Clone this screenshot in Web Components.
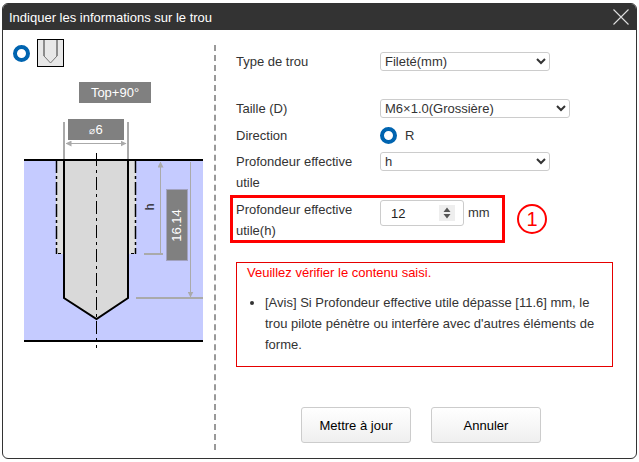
<!DOCTYPE html>
<html lang="fr">
<head>
<meta charset="utf-8">
<title>Indiquer les informations sur le trou</title>
<style>
  html, body { margin: 0; background: #fff; }
  body { padding: 3px 2px 3px 2px; font-family: "Liberation Sans", Arial, sans-serif; }
</style>
</head>
<body>
<hole-dialog heading="Indiquer les informations sur le trou">
  <hole-sketch slot="left"></hole-sketch>
  <hole-form slot="right"></hole-form>
</hole-dialog>

<script>
class HoleDialog extends HTMLElement {
  constructor() {
    super();
    this.attachShadow({ mode: 'open' });
    this.shadowRoot.innerHTML = `
      <style>
        :host {
          display: block;
          width: 635px;
          height: 456px;
          box-sizing: border-box;
          border: 1px solid #333;
          border-radius: 6px;
          overflow: hidden;
          background: #fff;
        }
        header {
          height: 26px;
          margin-top: -1px;
          padding: 1px 7px 0 6px;
          background: #333;
          color: #fff;
          font-size: 13px;
          display: flex;
          align-items: center;
          justify-content: space-between;
        }
        svg { display: block; }
        .body { display: flex; height: 429px; }
        .left { width: 211px; flex: none; position: relative; }
        .right { flex: 1; min-width: 0; }
        .divider {
          flex: none;
          width: 0;
          height: 405px;
          margin-top: 15px;
          border-left: 2px dashed #999;
        }
      </style>
      <header>
        <span id="heading"></span>
        <svg width="16" height="16" viewBox="0 0 16 16" fill="none" stroke="#ddd" stroke-width="1.1">
          <path d="M0.5 0.5 15.5 15.5M15.5 0.5 0.5 15.5"/>
        </svg>
      </header>
      <div class="body">
        <div class="left"><slot name="left"></slot></div>
        <div class="divider"></div>
        <div class="right"><slot name="right"></slot></div>
      </div>
    `;
  }

  connectedCallback() {
    this.shadowRoot.getElementById('heading').textContent = this.getAttribute('heading');
  }
}

class RadioMark extends HTMLElement {
  constructor() {
    super();
    this.attachShadow({ mode: 'open' });
    this.shadowRoot.innerHTML = `
      <style>
        :host {
          display: inline-block;
          width: 9px;
          height: 9px;
          border: 4px solid #0064b0;
          border-radius: 50%;
          background: #fff;
          flex: none;
        }
      </style>
    `;
  }
}

class HoleSketch extends HTMLElement {
  constructor() {
    super();
    this.attachShadow({ mode: 'open' });
    // svg coordinates = page coordinates, shifted by the left panel origin (3,30)
    this.shadowRoot.innerHTML = `
      <style>
        :host { display: block; height: 100%; }
        .picker { display: flex; align-items: center; gap: 7px; padding: 9px 0 0 10px; }
        svg.thumb { display: block; }
        svg.draw { display: block; position: absolute; left: 0; top: 0; }
        text { font-family: "Liberation Sans", Arial, sans-serif; }
      </style>
      <div class="picker">
        <radio-mark></radio-mark>
        <svg class="thumb" width="27" height="28" viewBox="0 0 27 28">
          <rect x="0.5" y="0.5" width="26" height="27" fill="#e8e8e8" stroke="#000"/>
          <path d="M7 1V17M20 1V17" fill="none" stroke="#333"/>
          <path d="M7 17L13.5 24L20 17" fill="none" stroke="#777"/>
        </svg>
      </div>
      <svg class="draw" width="211" height="429" viewBox="3 30 211 429">
        <defs>
          <marker id="arr" viewBox="0 0 6 6" refX="5.5" refY="3" markerWidth="6" markerHeight="6" orient="auto-start-reverse">
            <path d="M0 0 6 3 0 6Z" fill="#aaa"/>
          </marker>
        </defs>

        <rect x="79" y="82" width="72" height="21" fill="#808080"/>
        <text x="115" y="97" font-size="13" fill="#fff" text-anchor="middle">Top+90°</text>

        <rect x="24" y="160" width="179" height="181" fill="#c5cbff"/>
        <rect x="56" y="160" width="80" height="94" fill="#dfdfdf"/>
        <path d="M64 160V298L96.5 319L128 298V160Z" fill="#d9d9d9"/>
        <rect x="68" y="119" width="56" height="21" fill="#808080"/>
        <text x="96" y="134" font-size="13" fill="#fff" text-anchor="middle"><tspan font-size="10">⌀</tspan>6</text>

        <path d="M64 122V160M128 122V160" stroke="#aaa" stroke-width="2"/>
        <path d="M66 143.5H126" stroke="#aaa" marker-start="url(#arr)" marker-end="url(#arr)"/>
        <path d="M160.5 162V254M190.5 162V297" stroke="#aaa" marker-start="url(#arr)" marker-end="url(#arr)"/>
        <path d="M144 254H163M136 298H203" stroke="#aaa" stroke-width="2"/>

        <rect x="166.5" y="189.5" width="21" height="71" fill="#808080" stroke="#a3a3c0"/>
        <text transform="translate(181 225.5) rotate(-90)" font-size="13" fill="#fff" text-anchor="middle">16.14</text>
        <text transform="translate(154 207) rotate(-90)" font-size="12" fill="#222" text-anchor="middle">h</text>

        <path d="M24 160H203M24 341H203" stroke="#000" stroke-width="2"/>
        <path d="M64 160V298L96.5 319L128 298V160" fill="none" stroke="#000" stroke-width="2"/>
        <path d="M56.5 160V254M135.5 160V254" fill="none" stroke="#000" stroke-width="1.5" stroke-dasharray="13 3 3 3"/>
        <path d="M58 253.5H61M131 253.5H134" stroke="#000"/>
        <path d="M96.5 153V348" stroke="#000" stroke-dasharray="13 4 3 4"/>
      </svg>
    `;
  }
}

class HoleForm extends HTMLElement {
  constructor() {
    super();
    this.attachShadow({ mode: 'open' });
    this.shadowRoot.innerHTML = `
      <style>
        :host {
          display: block;
          height: 100%;
          padding: 22px 0 0 20px;
          box-sizing: border-box;
          font-size: 13px;
          color: #333;
          line-height: 21px;
        }
        .row { display: flex; align-items: flex-start; width: 334px; }
        .row label { width: 144px; flex: none; margin-top: -1px; padding-right: 14px; box-sizing: border-box; }
        select {
          height: 19px;
          width: 170px;
          box-sizing: border-box;
          border: 1px solid #ccc;
          border-radius: 3px;
          background: #fff;
          color: #333;
          font: 13px "Liberation Sans", Arial, sans-serif;
          padding: 0;
          margin: 0;
          display: block;
        }
        select.wide { width: 190px; }
        .row.dir { align-items: center; height: 18px; margin-bottom: 8px; }
        .dir label { margin-top: 0; }
        .dir span { margin-left: 8px; }
        .marked {
          display: flex;
          align-items: flex-start;
          box-sizing: border-box;
          width: 275px;
          height: 48px;
          margin-left: -6px;
          padding: 2px 0 0 3px;
          border: 3px solid #f00;
        }
        .marked label { width: 144px; flex: none; margin-top: -1px; padding-right: 14px; box-sizing: border-box; }
        .number { position: relative; width: 84px; height: 26px; flex: none; }
        input {
          width: 84px;
          height: 26px;
          box-sizing: border-box;
          border: 1px solid #ccc;
          border-radius: 3px;
          padding: 0 26px 0 10px;
          margin: 0;
          color: #222;
          font: 13px "Liberation Sans", Arial, sans-serif;
          display: block;
          -moz-appearance: textfield;
        }
        input::-webkit-inner-spin-button { -webkit-appearance: none; margin: 0; }
        .spin {
          position: absolute;
          right: 9px;
          top: 5px;
          width: 16px;
          height: 16px;
          background: #eee;
        }
        .spin svg { display: block; }
        .unit { margin-left: 4px; line-height: 26px; }
        .flag { display: flex; align-items: center; gap: 12px; }
        .num {
          width: 30px; height: 30px;
          box-sizing: border-box;
          border: 2px solid #f00;
          border-radius: 50%;
          color: #f00;
          font-size: 20px;
          line-height: 26px;
          text-align: center;
        }
        .errors {
          box-sizing: border-box;
          width: 377px;
          height: 105px;
          margin-top: 19px;
          border: 1px solid #e60000;
          padding: 0 10px;
        }
        .errors p { margin: -1px 0 0; color: #f00; }
        ul { margin: 9px 0 0; padding: 0 0 0 18px; }
        .actions { display: flex; gap: 20px; margin: 40px 0 0 65px; }
        button {
          width: 110px;
          height: 36px;
          box-sizing: border-box;
          border: 1px solid #ccc;
          border-radius: 3px;
          background: linear-gradient(#fff, #efefef);
          color: #000;
          font: 13px "Liberation Sans", Arial, sans-serif;
          padding: 0;
        }
      </style>
      <div class="row" style="height:47px">
        <label>Type de trou</label>
        <select><option>Fileté(mm)</option></select>
      </div>
      <div class="row" style="height:27px">
        <label>Taille (D)</label>
        <select class="wide"><option>M6×1.0(Grossière)</option></select>
      </div>
      <div class="row dir">
        <label>Direction</label>
        <radio-mark></radio-mark><span>R</span>
      </div>
      <div class="row" style="height:43px">
        <label>Profondeur effective utile</label>
        <select><option>h</option></select>
      </div>
      <div class="flag">
        <div class="marked">
          <label>Profondeur effective utile(h)</label>
          <div class="number">
            <input type="number" value="12">
            <div class="spin">
              <svg width="16" height="16" viewBox="0 0 16 16" fill="#555">
                <path d="M8 2.5 11.5 7H4.5ZM8 13.5 4.5 9H11.5Z"/>
              </svg>
            </div>
          </div>
          <span class="unit">mm</span>
        </div>
        <div class="num">1</div>
      </div>
      <div class="errors">
        <p>Veuillez vérifier le contenu saisi.</p>
        <ul><li>[Avis] Si Profondeur effective utile dépasse [11.6] mm, le trou pilote pénètre ou interfère avec d'autres éléments de forme.</li></ul>
      </div>
      <div class="actions">
        <button>Mettre à jour</button>
        <button>Annuler</button>
      </div>
    `;
  }
}

customElements.define('radio-mark', RadioMark);
customElements.define('hole-dialog', HoleDialog);
customElements.define('hole-sketch', HoleSketch);
customElements.define('hole-form', HoleForm);
</script>
</body>
</html>
